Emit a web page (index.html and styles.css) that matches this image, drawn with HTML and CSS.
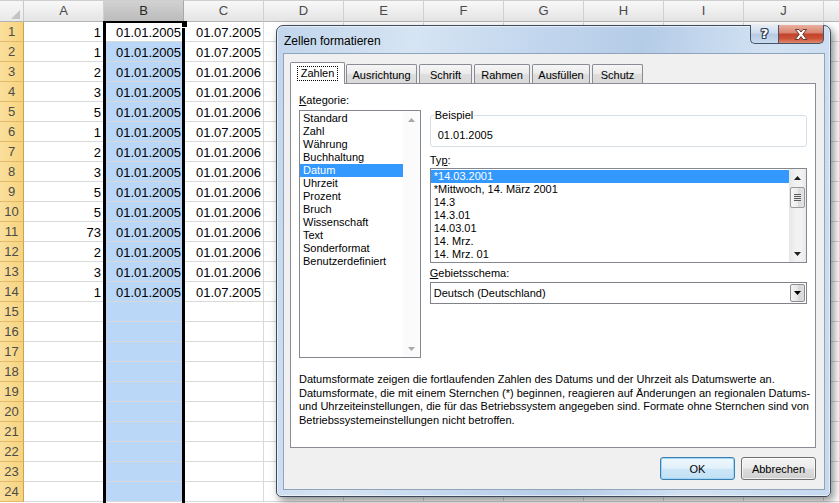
FILE: index.html
```html
<!DOCTYPE html>
<html lang="de">
<head>
<meta charset="utf-8">
<title>Zellen formatieren</title>
<link rel="stylesheet" href="styles.css">
</head>
<body>
<div class="view">
  <div class="sheet">
    <div class="corner"><svg width="24" height="21" viewBox="0 0 24 21"><polygon points="20,9 20,18 11,18" fill="#c4c4c4"/></svg></div>
    <div class="ch">A</div><div class="ch hs">B</div><div class="ch">C</div><div class="ch">D</div><div class="ch">E</div><div class="ch">F</div><div class="ch">G</div><div class="ch">H</div><div class="ch">I</div><div class="ch">J</div><div class="ch"></div>

    <div class="rh">1</div><div class="c">1</div><div class="c b act">01.01.2005</div><div class="c">01.07.2005</div><div class="rest"></div>
    <div class="rh">2</div><div class="c">1</div><div class="c b">01.01.2005</div><div class="c">01.07.2005</div><div class="rest"></div>
    <div class="rh">3</div><div class="c">2</div><div class="c b">01.01.2005</div><div class="c">01.01.2006</div><div class="rest"></div>
    <div class="rh">4</div><div class="c">3</div><div class="c b">01.01.2005</div><div class="c">01.01.2006</div><div class="rest"></div>
    <div class="rh">5</div><div class="c">5</div><div class="c b">01.01.2005</div><div class="c">01.01.2006</div><div class="rest"></div>
    <div class="rh">6</div><div class="c">1</div><div class="c b">01.01.2005</div><div class="c">01.07.2005</div><div class="rest"></div>
    <div class="rh">7</div><div class="c">2</div><div class="c b">01.01.2005</div><div class="c">01.01.2006</div><div class="rest"></div>
    <div class="rh">8</div><div class="c">3</div><div class="c b">01.01.2005</div><div class="c">01.01.2006</div><div class="rest"></div>
    <div class="rh">9</div><div class="c">5</div><div class="c b">01.01.2005</div><div class="c">01.01.2006</div><div class="rest"></div>
    <div class="rh">10</div><div class="c">5</div><div class="c b">01.01.2005</div><div class="c">01.01.2006</div><div class="rest"></div>
    <div class="rh">11</div><div class="c">73</div><div class="c b">01.01.2005</div><div class="c">01.01.2006</div><div class="rest"></div>
    <div class="rh">12</div><div class="c">2</div><div class="c b">01.01.2005</div><div class="c">01.01.2006</div><div class="rest"></div>
    <div class="rh">13</div><div class="c">3</div><div class="c b">01.01.2005</div><div class="c">01.01.2006</div><div class="rest"></div>
    <div class="rh">14</div><div class="c">1</div><div class="c b">01.01.2005</div><div class="c">01.07.2005</div><div class="rest"></div>
    <div class="rh">15</div><div class="c"></div><div class="c b"></div><div class="c"></div><div class="rest"></div>
    <div class="rh">16</div><div class="c"></div><div class="c b"></div><div class="c"></div><div class="rest"></div>
    <div class="rh">17</div><div class="c"></div><div class="c b"></div><div class="c"></div><div class="rest"></div>
    <div class="rh">18</div><div class="c"></div><div class="c b"></div><div class="c"></div><div class="rest"></div>
    <div class="rh">19</div><div class="c"></div><div class="c b"></div><div class="c"></div><div class="rest"></div>
    <div class="rh">20</div><div class="c"></div><div class="c b"></div><div class="c"></div><div class="rest"></div>
    <div class="rh">21</div><div class="c"></div><div class="c b"></div><div class="c"></div><div class="rest"></div>
    <div class="rh">22</div><div class="c"></div><div class="c b"></div><div class="c"></div><div class="rest"></div>
    <div class="rh">23</div><div class="c"></div><div class="c b"></div><div class="c"></div><div class="rest"></div>
    <div class="rh">24</div><div class="c"></div><div class="c b"></div><div class="c"></div><div class="rest"></div>
  </div>
  <div class="selbox"></div>
  <div class="handle"></div>

  <div class="dlg">
    <div class="titlebar">
      <span class="ttl">Zellen formatieren</span>
      <div class="tbtns">
        <div class="help"><span>?</span></div>
        <div class="close"><svg width="14" height="11" viewBox="0 0 14 11"><path d="M1.5 0.5H5L7 3L9 0.5H12.5L8.8 5.3L12.8 10.5H9.2L7 7.6L4.8 10.5H1.2L5.2 5.3Z" fill="#fff" stroke="#5a2b22" stroke-width="0.9" stroke-linejoin="round"/></svg></div>
      </div>
    </div>
    <div class="client">
      <div class="tabs">
        <div class="tab on"><span class="focus">Zahlen</span></div>
        <div class="tab t1">Ausrichtung</div>
        <div class="tab t2">Schrift</div>
        <div class="tab t3">Rahmen</div>
        <div class="tab t4">Ausfüllen</div>
        <div class="tab t5">Schutz</div>
      </div>
      <div class="panel">
        <div class="top">
          <div class="left">
            <div class="lbl"><u>K</u>ategorie:</div>
            <div class="lb cat">
              <div class="items">
                <div class="item">Standard</div>
                <div class="item">Zahl</div>
                <div class="item">Währung</div>
                <div class="item">Buchhaltung</div>
                <div class="item sel">Datum</div>
                <div class="item">Uhrzeit</div>
                <div class="item">Prozent</div>
                <div class="item">Bruch</div>
                <div class="item">Wissenschaft</div>
                <div class="item">Text</div>
                <div class="item">Sonderformat</div>
                <div class="item">Benutzerdefiniert</div>
              </div>
              <div class="sb dis">
                <div class="arr"><svg width="7" height="4" viewBox="0 0 7 4"><polygon points="3.5,0 7,4 0,4" fill="#a8a8a8"/></svg></div>
                <div class="arr"><svg width="7" height="4" viewBox="0 0 7 4"><polygon points="0,0 7,0 3.5,4" fill="#a8a8a8"/></svg></div>
              </div>
            </div>
          </div>
          <div class="right">
            <fieldset class="grp">
              <legend>Beispiel</legend>
              <div class="val">01.01.2005</div>
            </fieldset>
            <div class="lbl typ">Ty<u>p</u>:</div>
            <div class="lb typlist">
              <div class="items">
                <div class="item sel">*14.03.2001</div>
                <div class="item">*Mittwoch, 14. März 2001</div>
                <div class="item">14.3</div>
                <div class="item">14.3.01</div>
                <div class="item">14.03.01</div>
                <div class="item">14. Mrz.</div>
                <div class="item">14. Mrz. 01</div>
              </div>
              <div class="sb act">
                <div class="arr"><svg width="7" height="4" viewBox="0 0 7 4"><polygon points="3.5,0 7,4 0,4" fill="#202020"/></svg></div>
                <div class="thumb"><div class="grip"></div></div>
                <div class="arr dn"><svg width="7" height="4" viewBox="0 0 7 4"><polygon points="0,0 7,0 3.5,4" fill="#202020"/></svg></div>
              </div>
            </div>
            <div class="lbl geb"><u>G</u>ebietsschema:</div>
            <div class="dd">
              <span>Deutsch (Deutschland)</span>
              <div class="ddb"><svg width="7" height="4" viewBox="0 0 7 4"><polygon points="0,0 7,0 3.5,4" fill="#000"/></svg></div>
            </div>
          </div>
        </div>
        <p class="desc">Datumsformate zeigen die fortlaufenden Zahlen des Datums und der Uhrzeit als Datumswerte an.<br>Datumsformate, die mit einem Sternchen (*) beginnen, reagieren auf Änderungen an regionalen Datums-<br>und Uhrzeiteinstellungen, die für das Betriebssystem angegeben sind. Formate ohne Sternchen sind von<br>Betriebssystemeinstellungen nicht betroffen.</p>
      </div>
      <div class="btns">
        <button class="btn ok">OK</button>
        <button class="btn">Abbrechen</button>
      </div>
    </div>
  </div>
</div>
</body>
</html>
```

FILE: styles.css
```css
html, body {
  margin: 0;
  padding: 0;
  background: #fff;
}
body {
  width: 839px;
  height: 503px;
  overflow: hidden;
}
.view {
  position: relative;
  width: 839px;
  height: 503px;
  overflow: hidden;
  font-family: "Liberation Sans", Arial, sans-serif;
}

/* ---------- spreadsheet ---------- */
.sheet {
  display: grid;
  grid-template-columns: 24px repeat(11, 80px);
  grid-template-rows: 22px repeat(24, 20px);
  width: 904px;
  font-size: 13px;
  color: #000;
}
.corner {
  box-sizing: border-box;
  background: linear-gradient(#f7f7f7, #e9e9e9);
  border-right: 1px solid #c9c9c9;
  border-bottom: 1px solid #b3b3b3;
  border-top: 1px solid #cfcfcf;
}
.corner svg { display: block; }
.ch {
  box-sizing: border-box;
  background: linear-gradient(#f8f8f8, #ececec 60%, #e4e4e4);
  border-right: 1px solid #d0d0d0;
  border-bottom: 1px solid #b3b3b3;
  border-top: 1px solid #cfcfcf;
  text-align: center;
  line-height: 20px;
  color: #4a4a4a;
}
.ch.hs {
  background: linear-gradient(#d2d2d2, #c4c4c4 60%, #bcbcbc);
  color: #262626;
  border-right-color: #a8a8a8;
}
.rh {
  box-sizing: border-box;
  background: linear-gradient(to right, #fadf9c, #f7d37e);
  border-right: 1px solid #c9a455;
  border-bottom: 1px solid #e3bb68;
  text-align: center;
  line-height: 19px;
  color: #4b4b4b;
}
.c {
  box-sizing: border-box;
  border-right: 1px solid #d9d9d9;
  border-bottom: 1px solid #d9d9d9;
  text-align: right;
  padding: 1px 2px 0 0;
  line-height: 19px;
  white-space: nowrap;
  overflow: hidden;
}
.c.b { background: #bad7f7; }
.c.b.act { background: #fff; }
.rest {
  grid-column: span 8;
  box-sizing: border-box;
  border-bottom: 1px solid #d9d9d9;
  background: repeating-linear-gradient(to right, transparent 0 79px, #d9d9d9 79px 80px);
}
.selbox {
  position: absolute;
  left: 103px;
  top: 21px;
  width: 82px;
  height: 490px;
  box-sizing: border-box;
  border-left: 3px solid #000;
  border-right: 3px solid #000;
  border-top: 2px solid #000;
}
.handle {
  position: absolute;
  left: 182px;
  top: 21px;
  width: 5px;
  height: 6px;
  background: #000;
  border-bottom: 1px solid #fff;
}

/* ---------- dialog ---------- */
.dlg {
  position: absolute;
  left: 276px;
  top: 25px;
  width: 555px;
  height: 472px;
  box-sizing: border-box;
  border: 1px solid #3e4b5d;
  border-radius: 7px 7px 5px 5px;
  padding: 0 5px 6px 6px;
  display: flex;
  flex-direction: column;
  background: linear-gradient(100deg, #c1d5ec 0%, #d6e4f3 22%, #c3d7ee 40%, #b5cce7 58%, #d2e2f3 78%, #c6d9ef 100%);
  box-shadow: 3px 4px 9px rgba(0, 0, 0, 0.45), inset 0 0 0 1px rgba(255, 255, 255, 0.55);
  font-family: "Liberation Sans", Arial, sans-serif;
  font-size: 11px;
  color: #000;
}
.titlebar {
  height: 27px;
  display: flex;
  align-items: center;
  flex: none;
}
.ttl {
  font-size: 12px;
  padding: 2px 0 0 1px;
  color: #000;
}
.tbtns {
  margin-left: auto;
  margin-right: 1px;
  align-self: flex-start;
  margin-top: -1px;
  display: flex;
  height: 19px;
}
.help, .close {
  box-sizing: border-box;
  height: 19px;
  border: 1px solid #43546b;
  border-top: none;
  display: flex;
  align-items: center;
  justify-content: center;
}
.help {
  width: 28px;
  border-right: none;
  border-radius: 0 0 0 5px;
  background: linear-gradient(#e4ecf6, #cfdcec 45%, #b7cbe3 50%, #c9daee);
}
.help span {
  font-family: "DejaVu Sans", sans-serif;
  font-weight: bold;
  font-size: 13px;
  line-height: 14px;
  color: #fff;
  text-shadow: 1px 0 #34445a, -1px 0 #34445a, 0 1px #34445a, 0 -1px #34445a, 1px 1px #34445a, -1px -1px #34445a, 1px -1px #34445a, -1px 1px #34445a;
}
.close {
  width: 46px;
  border-radius: 0 0 5px 0;
  background: linear-gradient(#eab0a2, #d98570 42%, #c2442c 52%, #cc5236 75%, #e08a70);
}
.close svg { display: block; }

.client {
  flex: 1;
  box-sizing: border-box;
  border: 1px solid #8fa3bb;
  background: #f0f0f0;
  padding: 8px 8px 9px 6px;
  display: flex;
  flex-direction: column;
}
.tabs {
  display: flex;
  align-items: flex-end;
  height: 22px;
  margin-bottom: -1px;
  position: relative;
  z-index: 1;
  flex: none;
}
.tab {
  box-sizing: border-box;
  height: 19px;
  margin-bottom: 1px;
  margin-left: 2px;
  border: 1px solid #898c95;
  border-bottom: none;
  border-radius: 2px 2px 0 0;
  background: linear-gradient(#f6f6f6, #ebebeb 48%, #dedede 52%, #d9d9d9);
  display: flex;
  align-items: center;
  justify-content: center;
  padding-top: 1px;
  white-space: nowrap;
}
.tab.on {
  width: 55px;
  height: 22px;
  margin: 0;
  background: #fff;
  padding-top: 0;
  padding-bottom: 1px;
}
.focus {
  outline: 1px dotted #000;
  outline-offset: 0;
  padding: 0 3px;
  line-height: 13px;
}
.t1 { width: 71px; margin-left: 1px; }
.t2 { width: 53px; }
.t3 { width: 56px; }
.t4 { width: 58px; }
.t5 { width: 51px; }

.panel {
  height: 365px;
  flex: none;
  box-sizing: border-box;
  border: 1px solid #898c95;
  background: #fff;
  padding: 10px 8px 0 8px;
}
.top {
  display: flex;
  gap: 9px;
}
.left { width: 122px; }
.right { width: 378px; padding-top: 15px; }
.lbl {
  line-height: 13px;
  height: 13px;
  white-space: nowrap;
}
.lb {
  box-sizing: border-box;
  border: 1px solid #828790;
  background: #fff;
  display: flex;
}
.cat { height: 248px; margin-top: 3px; }
.items { flex: 1; padding-top: 1px; min-width: 0; }
.item {
  height: 13px;
  line-height: 13px;
  padding-left: 3px;
  white-space: nowrap;
}
.item.sel { background: #3399ff; color: #fff; }
.sb {
  width: 17px;
  flex: none;
  display: flex;
  flex-direction: column;
}
.sb.dis { justify-content: space-between; background: #fbfbfb; }
.arr {
  height: 17px;
  display: flex;
  align-items: center;
  justify-content: center;
}
.arr svg { display: block; }
.sb.act {
  background: linear-gradient(to right, #e6e6e6, #f2f2f2 40%, #f2f2f2 70%, #e9e9e9);
}
.thumb {
  box-sizing: border-box;
  height: 21px;
  margin: 1px 1px 0 1px;
  border: 1px solid #9a9a9a;
  border-radius: 2px;
  background: linear-gradient(to right, #f6f6f6, #ececec 50%, #dcdcdc 51%, #e3e3e3);
  display: flex;
  align-items: center;
  justify-content: center;
}
.grip {
  width: 7px;
  height: 7px;
  background: repeating-linear-gradient(#5c5c5c 0 1px, #e9e9e9 1px 2px);
}
.arr.dn { margin-top: auto; }

.grp {
  margin: 0;
  padding: 0 0 0 3px;
  border: 1px solid #d5dfe5;
  border-radius: 3px;
  min-width: 0;
}
.grp legend {
  padding: 0 1px;
  line-height: 13px;
}
.val {
  line-height: 13px;
  padding: 7px 0 4px 4px;
}
.typ { margin-top: 7px; }
.typlist { height: 95px; margin-top: 1px; }
.geb { margin-top: 4px; }
.dd {
  box-sizing: border-box;
  height: 22px;
  margin-top: 2px;
  border: 1px solid #7f8289;
  background: #fff;
  display: flex;
  align-items: center;
  padding-left: 3px;
}
.ddb {
  box-sizing: border-box;
  margin-left: auto;
  margin-right: 1px;
  width: 15px;
  height: 18px;
  border: 1px solid #8c8c8c;
  border-radius: 2px;
  background: linear-gradient(to right, #f3f3f3, #e6e6e6 50%, #d6d6d6 51%, #dddddd);
  display: flex;
  align-items: center;
  justify-content: center;
}
.ddb svg { display: block; }
.desc {
  margin: 15px 0 0 0;
  line-height: 13.6px;
  white-space: nowrap;
}
.btns {
  display: flex;
  justify-content: flex-end;
  gap: 6px;
  margin-top: 9px;
  flex: none;
}
.btn {
  box-sizing: border-box;
  width: 75px;
  height: 23px;
  padding: 0;
  border: 1px solid #707070;
  border-radius: 3px;
  background: linear-gradient(#f3f3f3, #ebebeb 48%, #dddddd 52%, #cfcfcf);
  font-family: "Liberation Sans", Arial, sans-serif;
  font-size: 11px;
  color: #000;
  box-shadow: inset 0 0 0 1px rgba(255, 255, 255, 0.7);
}
.btn.ok {
  border-color: #3c7fb1;
  box-shadow: inset 0 0 0 1px #9fd6f5;
  background: linear-gradient(#eef7fd, #e3f1fb 48%, #cde7f8 52%, #c1e0f4);
}
```
